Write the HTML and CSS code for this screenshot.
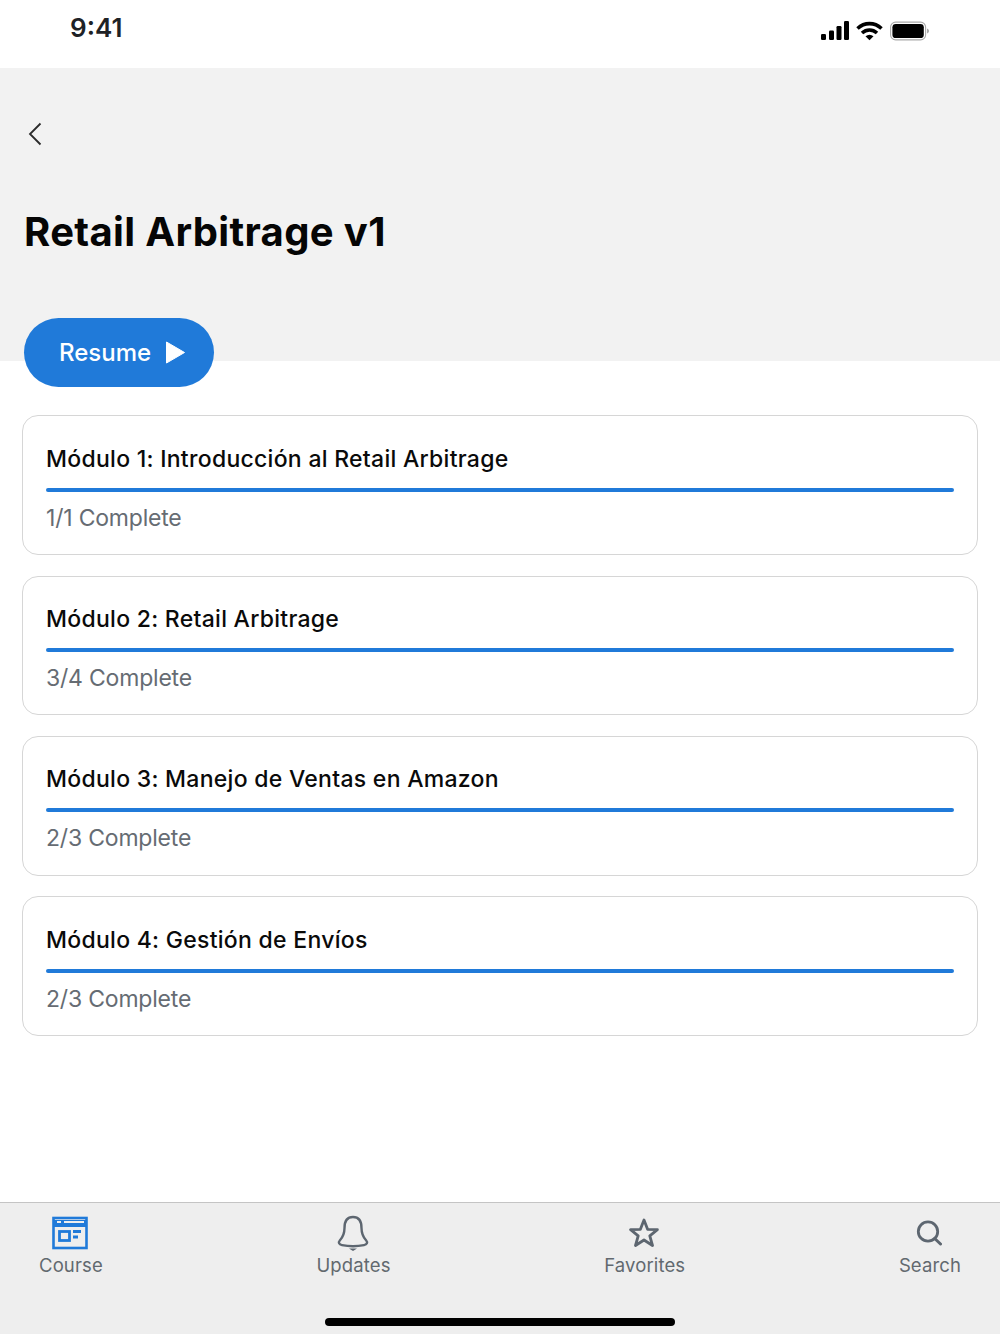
FILE: index.html
```html
<!DOCTYPE html>
<html lang="es">
<head>
<meta charset="utf-8">
<title>Retail Arbitrage v1</title>
<link rel="stylesheet" href="styles.css">
</head>
<body>
<div class="app">
  <div class="status">
    <span class="time">9:41</span>
    <div class="status-icons">
      <svg width="29" height="20" viewBox="0 0 29 20"><g fill="#000"><rect x="1" y="13" width="5" height="6" rx="1.2"/><rect x="9" y="9.500" width="5" height="9.500" rx="1.2"/><rect x="16.500" y="5" width="5" height="14" rx="1.200"/><rect x="24" y="0" width="5" height="19" rx="1.200"/></g></svg>
      <svg width="27" height="20" viewBox="0 0 27 20"><g fill="none" stroke="#000" stroke-width="3.600"><path d="M1.500 7.500C8.500 1 18.500 1 25.500 7.500"/><path d="M6 12C10.500 8 16.500 8 21 12"/></g><path d="M9.500 15.200C12 13.200 15 13.200 17.500 15.200L13.500 19.200Z" fill="#000"/></svg>
      <svg width="39" height="20" viewBox="0 0 39 20"><rect x="0.600" y="1.100" width="35" height="17.800" rx="5" fill="none" stroke="#aaa" stroke-width="1.100"/><rect x="2.400" y="2.900" width="31.400" height="14.200" rx="3.400" fill="#000"/><path d="M37 7.500c1.300.4 2 1.300 2 2.500s-.7 2.100-2 2.500Z" fill="#aaa"/></svg>
    </div>
  </div>
  <header class="hero">
    <svg class="back" width="14" height="24" viewBox="0 0 14 24"><path d="M12.500 1.500L2 12l10.500 10.500" fill="none" stroke="#2b2b2b" stroke-width="1.800"/></svg>
    <h1>Retail Arbitrage v1</h1>
    <button class="resume">Resume<svg width="19" height="23" viewBox="0 0 19 23"><path d="M0.500 1L18.500 11.500 0.500 22Z" fill="#fff" stroke="#fff" stroke-linejoin="round"/></svg></button>
  </header>
  <main class="modules">
    <section class="card"><h2>Módulo 1: Introducción al Retail Arbitrage</h2><div class="bar"></div><p>1/1 Complete</p></section>
    <section class="card"><h2>Módulo 2: Retail Arbitrage</h2><div class="bar"></div><p>3/4 Complete</p></section>
    <section class="card"><h2>Módulo 3: Manejo de Ventas en Amazon</h2><div class="bar"></div><p>2/3 Complete</p></section>
    <section class="card"><h2>Módulo 4: Gestión de Envíos</h2><div class="bar"></div><p>2/3 Complete</p></section>
  </main>
  <nav class="tabs">
    <div class="tab">
      <svg width="36" height="34" viewBox="0 0 36 34"><rect x="1.500" y="2" width="33" height="30" fill="none" stroke="#207ad9" stroke-width="2.600"/><path d="M1.500 7.500H34.500" stroke="#207ad9" stroke-width="7"/><path d="M5 6H9M12 6H32" stroke="#eee" stroke-width="2.200"/><rect x="7.500" y="15.500" width="10" height="9" fill="none" stroke="#207ad9" stroke-width="2.800"/><path d="M21 15.500H29M21 21H26" stroke="#207ad9" stroke-width="2.800"/></svg>
      <span>Course</span>
    </div>
    <div class="tab">
      <svg width="36" height="36" viewBox="0 0 36 36"><path d="M18 2C11.500 2 9.500 7.500 9.500 13C9.500 19 8 22 4.800 25.500C3 27.500 4 29.500 7 30.100C14 31.500 22 31.500 29 30.100C32 29.500 33 27.500 31.200 25.500C28 22 26.500 19 26.500 13C26.500 7.500 24.500 2 18 2Z" fill="none" stroke="#5d6670" stroke-width="2.400"/><path d="M14 33.500H22L18 36Z" fill="#5d6670"/></svg>
      <span>Updates</span>
    </div>
    <div class="tab">
      <svg width="30" height="34" viewBox="0 0 30 34"><path d="M15 4L18.600 13.300 28.400 13.600 20.800 19.800 23.500 29.500 15 24 6.500 29.500 9.200 19.800 1.600 13.600 11.400 13.300Z" fill="none" stroke="#5d6670" stroke-width="2.800" stroke-linejoin="round"/></svg>
      <span>Favorites</span>
    </div>
    <div class="tab">
      <svg width="26" height="34" viewBox="0 0 26 34"><circle cx="12" cy="15.500" r="9.700" fill="none" stroke="#5d6670" stroke-width="2.800"/><path d="M18.700 22.500L24.500 28" stroke="#5d6670" stroke-width="3" stroke-linecap="round"/></svg>
      <span>Search</span>
    </div>
    <div class="home"></div>
  </nav>
</div>
</body>
</html>
```
FILE: styles.css
```css
* { box-sizing: border-box; }
html, body { margin: 0; padding: 0; background: #fff; }
body { font-family: Inter, "Open Sans", Arial, sans-serif; }
.app { width: 1000px; height: 1334px; display: flex; flex-direction: column; overflow: hidden; }

.status { height: 68px; flex: none; display: flex; justify-content: space-between; padding: 12px 71px 0 70px; background: #fff; }
.time { font-size: 26px; font-weight: 600; line-height: 32px; color: #1e2226; }
.status-icons { display: flex; align-items: flex-start; gap: 7px; padding-top: 9px; }

.hero { height: 293px; flex: none; background: #f2f2f2; padding: 54px 0 0 24px; display: flex; flex-direction: column; align-items: flex-start; }
.back { margin-left: 4px; flex: none; }
.hero h1 { margin: 57px 0 0; font-size: 40px; line-height: 58px; font-weight: 700; color: #050505; letter-spacing: 0.350px; white-space: nowrap; }
.resume { margin-top: 57px; width: 190px; height: 69px; flex: none; border: 0; border-radius: 35px; background: #207ad9; color: #fff; font-family: Inter, sans-serif; font-size: 24px; font-weight: 500; display: flex; align-items: center; gap: 15px; padding: 0 0 0 35px; }

.modules { flex: 1; padding: 54.200px 22px 0; display: flex; flex-direction: column; gap: 20.600px; }
.card { height: 139.800px; flex: none; border: 1px solid #d6d6d6; border-radius: 16px; padding: 24.400px 23px 0; }
.card h2 { margin: 0; font-size: 23px; line-height: 36px; font-weight: 500; color: #0a0a0a; letter-spacing: 0.280px; white-space: nowrap; }
.bar { height: 4px; margin-top: 11px; background: #207ad9; border-radius: 2px; }
.card p { margin: 8px 0 0; font-size: 23px; line-height: 36px; color: #666c73; letter-spacing: -0.200px; }

.tabs { position: relative; height: 132px; flex: none; background: #eee; border-top: 1px solid #c4c4c4; display: flex; justify-content: space-between; align-items: flex-start; padding: 11px 39px 0; }
.tab { display: flex; flex-direction: column; align-items: center; }
.tab span { margin-top: 1px; font-size: 18.500px; line-height: 24px; letter-spacing: 0.120px; color: #62696f; white-space: nowrap; }
.tab svg { display: block; height: 38px; margin-right: 2px; }
.home { position: absolute; left: 325px; top: 115px; width: 350px; height: 8px; border-radius: 4px; background: #000; }
```
